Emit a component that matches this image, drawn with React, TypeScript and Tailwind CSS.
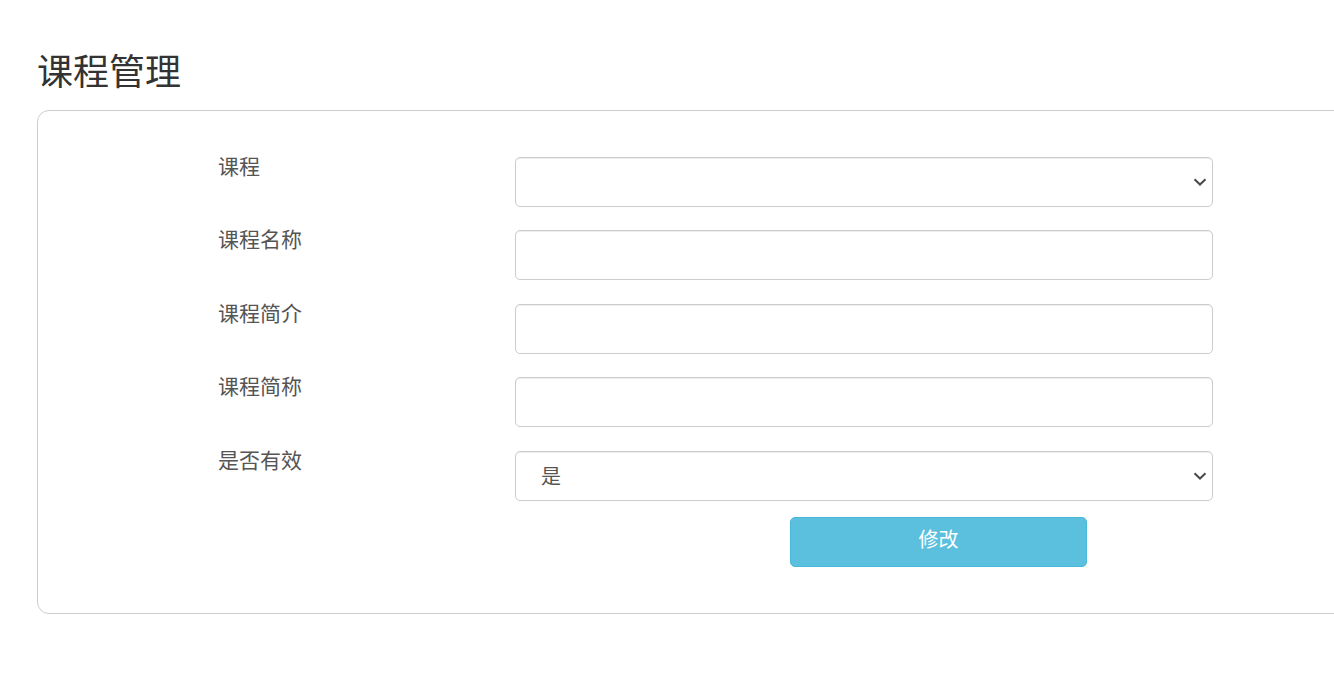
import React from "react";

const FONT = { fontFamily: '"Microsoft YaHei", "Noto Sans CJK SC", "Noto Sans", sans-serif' };

function Chevron() {
  return (
    <svg
      width="14"
      height="8"
      viewBox="0 0 14 8"
      className="pointer-events-none absolute right-[6px] top-1/2 -translate-y-1/2"
    >
      <path d="M1.5 1.2 L7 6.5 L12.5 1.2" fill="none" stroke="#4a4a4a" strokeWidth="2" />
    </svg>
  );
}

function Field({ label, children }: { label: string; children: React.ReactNode }) {
  return (
    <div className="flex">
      <div className="w-[297px] pl-[180px] box-content text-[21px] leading-[21px] text-[#555] -mt-[2px]">
        {label}
      </div>
      <div className="relative w-[698px]">{children}</div>
    </div>
  );
}

const inputCls =
  "block w-full h-[50px] rounded-[5px] border border-[#ccc] bg-white px-[25px] text-[20px] text-[#555] shadow-[inset_0_1px_1px_rgba(0,0,0,0.075)] outline-none";

export default function App() {
  return (
    <div className="w-[1334px] h-[700px] overflow-hidden bg-white" style={FONT}>
      <div className="pl-[37px] pt-[48px]">
        <h1 className="text-[36px] leading-[42px] text-[#333] font-normal mb-[20px]">课程管理</h1>
        <div className="w-[1320px] h-[504px] rounded-[12px] border border-[#ccc] pt-[46px]">
          <div className="flex flex-col">
            <Field label="课程">
              <select className={`${inputCls} appearance-none`} defaultValue="">
                <option value=""></option>
              </select>
              <Chevron />
            </Field>
            <div className="h-[23px]" />
            <Field label="课程名称">
              <input className={inputCls} />
            </Field>
            <div className="h-[24px]" />
            <Field label="课程简介">
              <input className={inputCls} />
            </Field>
            <div className="h-[23px]" />
            <Field label="课程简称">
              <input className={inputCls} />
            </Field>
            <div className="h-[24px]" />
            <Field label="是否有效">
              <select className={`${inputCls} appearance-none`} defaultValue="1">
                <option value="1">是</option>
                <option value="0">否</option>
              </select>
              <Chevron />
            </Field>
            <div className="h-[16px]" />
            <div className="pl-[752px]">
              <button className="w-[297px] h-[50px] rounded-[5px] border border-[#46b8da] bg-[#5bc0de] text-white text-[20px] leading-[20px] pb-[6px]">
                修改
              </button>
            </div>
          </div>
        </div>
      </div>
    </div>
  );
}
